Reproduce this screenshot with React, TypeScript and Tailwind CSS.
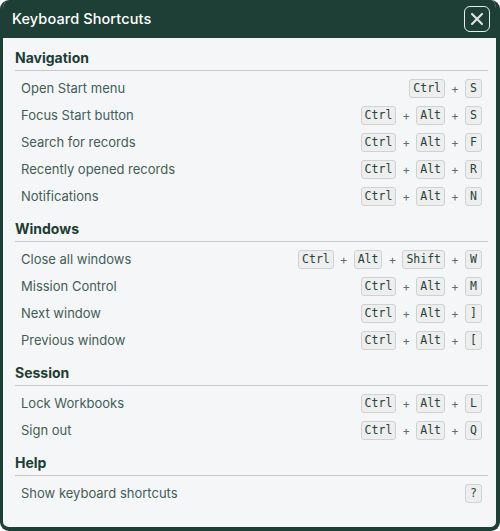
import { X } from "lucide-react";

type Shortcut = { label: string; keys: string[] };
type Section = { title: string; items: Shortcut[] };

const sections: Section[] = [
  {
    title: "Navigation",
    items: [
      { label: "Open Start menu", keys: ["Ctrl", "S"] },
      { label: "Focus Start button", keys: ["Ctrl", "Alt", "S"] },
      { label: "Search for records", keys: ["Ctrl", "Alt", "F"] },
      { label: "Recently opened records", keys: ["Ctrl", "Alt", "R"] },
      { label: "Notifications", keys: ["Ctrl", "Alt", "N"] },
    ],
  },
  {
    title: "Windows",
    items: [
      { label: "Close all windows", keys: ["Ctrl", "Alt", "Shift", "W"] },
      { label: "Mission Control", keys: ["Ctrl", "Alt", "M"] },
      { label: "Next window", keys: ["Ctrl", "Alt", "]"] },
      { label: "Previous window", keys: ["Ctrl", "Alt", "["] },
    ],
  },
  {
    title: "Session",
    items: [
      { label: "Lock Workbooks", keys: ["Ctrl", "Alt", "L"] },
      { label: "Sign out", keys: ["Ctrl", "Alt", "Q"] },
    ],
  },
  {
    title: "Help",
    items: [{ label: "Show keyboard shortcuts", keys: ["?"] }],
  },
];

export default function App() {
  return (
    <div className="h-[531px] w-[500px] bg-white font-['Inter',sans-serif]">
      <div className="flex h-full flex-col overflow-hidden rounded-[9px] border-b-4 border-l-[3px] border-r-4 border-[#1e3f35] bg-[#f5f6f8]">
        {/* TITLE BAR */}
        <header className="flex h-[38px] shrink-0 items-center justify-between bg-[#1e3f35] pl-[9px] pr-[6px]">
          <h1 className="text-[14.5px] font-medium tracking-[0.1px] text-white">Keyboard Shortcuts</h1>
          <button className="flex h-[26px] w-[26px] items-center justify-center rounded-[6px] border-[1.5px] border-[#e8ecea]">
            <X size={20} strokeWidth={2.6} className="text-[#dfe4e2]" />
          </button>
        </header>

        {/* SHORTCUT LIST */}
        <div className="flex flex-col gap-[9px] pl-3 pr-[8px] pt-[10px]">
          {sections.map((s) => (
            <section key={s.title}>
              <h2 className="border-b border-[#c6c8ca] pb-[2px] text-[14px] leading-5 font-bold text-[#1e3d33]">
                {s.title}
              </h2>
              <ul className="mt-[4px]">
                {s.items.map((it) => (
                  <li key={it.label} className="flex h-[27px] items-center justify-between px-1.5">
                    <span className="text-[13px] text-[#435d55]">{it.label}</span>
                    <Keys keys={it.keys} />
                  </li>
                ))}
              </ul>
            </section>
          ))}
        </div>
      </div>
    </div>
  );
}

// KEY COMBO
function Keys({ keys }: { keys: string[] }) {
  return (
    <span className="flex items-center gap-1.5">
      {keys.map((k, i) => (
        <span key={k + i} className="flex items-center gap-1.5">
          {i > 0 && <span className="text-[12px] text-[#5f6f6a]">+</span>}
          <kbd className="flex h-[19px] min-w-[17px] items-center justify-center rounded-[3px] border border-[#cfd1d2] bg-[#eeeeee] px-[3px] font-['DejaVu_Sans_Mono',monospace] text-[11.5px] text-[#24443a]">
            {k}
          </kbd>
        </span>
      ))}
    </span>
  );
}
